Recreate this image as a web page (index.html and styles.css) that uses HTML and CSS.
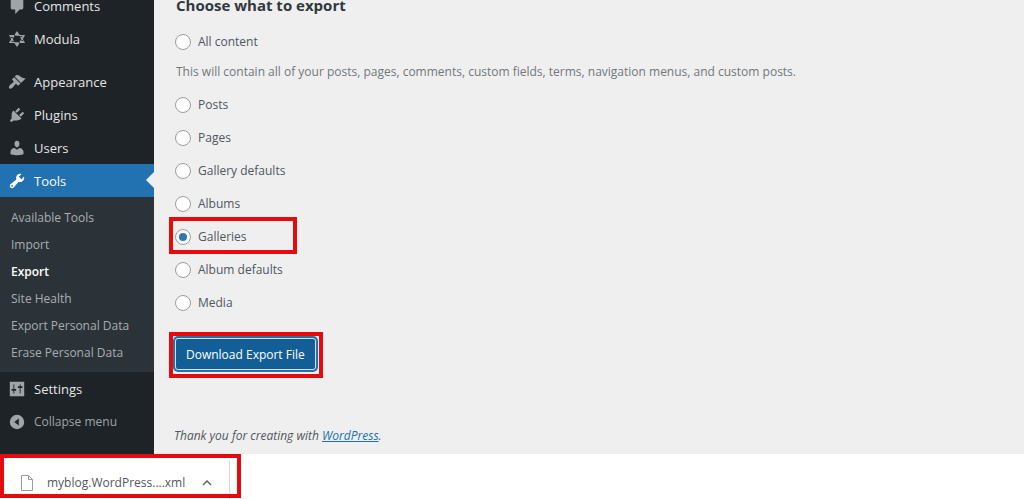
FILE: index.html
```html
<!DOCTYPE html>
<html lang="en">
<head>
    <meta charset="UTF-8">
    <meta name="viewport" content="width=device-width, initial-scale=1.0">
    <title>Export</title>
    <link rel="stylesheet" href="styles.css">
</head>
<body>
    <div class="admin">
        <!-- Admin menu -->
        <nav class="sidebar">
            <ul class="menu">
                <li>
                    <a href="#" class="menu-item">
                        <svg class="icon" viewBox="0 0 20 20"><path d="M5 2h10c1 0 2 .9 2 2v8c0 1-.9 2-2 2h-2l-5 5v-5H5c-1 0-2-.9-2-2V4c0-1 .9-2 2-2z"/></svg>
                        Comments
                    </a>
                </li>
                <li>
                    <a href="#" class="menu-item">
                        <svg class="icon" viewBox="0 0 20 20"><path fill-rule="evenodd" d="M10 1l3 4.500h6L16.500 10l2.500 4.500h-6L10 19l-3-4.500H1L3.500 10 1 5.500h6zM7.500 6.500L5.500 10l2 3.500h5l2-3.500-2-3.500z"/><path class="icon-gap" d="M6.500 4l2 4M16 7.500l-4 0M17 12l-4-1.500M13.500 16l-2-4M4 12.500h4M3 8l4 1.500"/></svg>
                        Modula
                    </a>
                </li>
                <li class="separator"></li>
                <li>
                    <a href="#" class="menu-item">
                        <svg class="icon" viewBox="0 0 20 20"><path d="M14.480 11.060L7.410 3.990l1.500-1.500c.5-.56 2.300-.47 3.510.32 1.210.8 1.430 1.280 2.910 2.100 1.180.64 2.450 1.260 4.450.85zm-.71.710L6.700 4.700 4.930 6.470c-.39.39-.39 1.020 0 1.410l1.060 1.060c.39.39.39 1.030 0 1.420-.6.6-1.430 1.110-2.210 1.690-.35.26-.7.53-1.010.84C1.430 14.230.4 16.080 1.400 17.070c.99 1 2.840-.03 4.180-1.360.31-.31.58-.66.85-1.020.57-.78 1.080-1.610 1.690-2.210.39-.39 1.020-.39 1.410 0l1.060 1.060c.39.39 1.020.39 1.410 0z"/></svg>
                        Appearance
                    </a>
                </li>
                <li>
                    <a href="#" class="menu-item">
                        <svg class="icon" viewBox="0 0 20 20"><path d="M13.110 4.360L9.870 7.600 8 5.730l3.240-3.240c.35-.34 1.050-.2 1.560.32.52.51.66 1.210.31 1.550zm-8 1.770l.91-1.120 9.010 9.010-1.190.84c-.71.71-2.630 1.160-3.820 1.160H6.140L4.900 17.260c-.59.59-1.540.59-2.120 0-.59-.58-.59-1.530 0-2.120l1.240-1.240v-3.880c0-1.130.4-3.190 1.090-3.890zm7.260 3.970l3.240-3.240c.34-.35 1.040-.21 1.550.31.52.51.66 1.210.31 1.550l-3.240 3.250z"/></svg>
                        Plugins
                    </a>
                </li>
                <li>
                    <a href="#" class="menu-item">
                        <svg class="icon" viewBox="0 0 20 20"><path d="M10 9.250c-2.270 0-2.730-3.440-2.730-3.440C7 4.020 7.820 2 9.970 2c2.160 0 2.980 2.020 2.710 3.810 0 0-.41 3.440-2.680 3.440zm0 2.570L12.720 10c2.390 0 4.520 2.330 4.520 4.530v2.490s-3.650 1.130-7.240 1.130c-3.650 0-7.240-1.130-7.240-1.130v-2.490c0-2.250 1.940-4.480 4.470-4.480z"/></svg>
                        Users
                    </a>
                </li>
                <li>
                    <a href="#" class="menu-item current">
                        <svg class="icon" viewBox="0 0 20 20"><path d="M16.680 9.770c-1.340 1.340-3.300 1.670-4.950.99l-5.410 6.520c-.99.99-2.590.99-3.580 0s-.99-2.590 0-3.570l6.520-5.420c-.68-1.650-.35-3.610.99-4.950 1.280-1.280 3.120-1.620 4.720-1.060l-2.890 2.890 2.820 2.820 2.860-2.870c.53 1.580.18 3.390-1.080 4.650zM3.810 16.210c.4.390 1.040.39 1.430 0 .4-.4.4-1.040 0-1.430-.39-.4-1.030-.4-1.430 0-.39.39-.39 1.030 0 1.430z"/></svg>
                        Tools
                    </a>
                    <ul class="submenu">
                        <li><a href="#">Available Tools</a></li>
                        <li><a href="#">Import</a></li>
                        <li><a href="#" class="active">Export</a></li>
                        <li><a href="#">Site Health</a></li>
                        <li><a href="#">Export Personal Data</a></li>
                        <li><a href="#">Erase Personal Data</a></li>
                    </ul>
                </li>
                <li>
                    <a href="#" class="menu-item">
                        <svg class="icon" viewBox="0 0 20 20"><path fill-rule="evenodd" d="M2 2h16v16H2zM6 5v5H4v2h2v3h1v-3h2v-2H7V5zM13 5v2h-2v2h2v6h1V9h2V7h-2V5z"/></svg>
                        Settings
                    </a>
                </li>
                <li>
                    <button type="button" class="menu-item collapse">
                        <svg class="icon" viewBox="0 0 20 20"><path fill-rule="evenodd" d="M10 2a8 8 0 1 0 0 16 8 8 0 0 0 0-16zM12 6v8l-5-4z"/></svg>
                        Collapse menu
                    </button>
                </li>
            </ul>
        </nav>

        <!-- Export form -->
        <main class="content">
            <form class="export-form">
                <h2>Choose what to export</h2>
                <label class="option"><input type="radio" name="content"> All content</label>
                <p class="description">This will contain all of your posts, pages, comments, custom fields, terms, navigation menus, and custom posts.</p>
                <label class="option"><input type="radio" name="content"> Posts</label>
                <label class="option"><input type="radio" name="content"> Pages</label>
                <label class="option"><input type="radio" name="content"> Gallery defaults</label>
                <label class="option"><input type="radio" name="content"> Albums</label>
                <label class="option highlight highlight-option"><input type="radio" name="content" checked> Galleries</label>
                <label class="option"><input type="radio" name="content"> Album defaults</label>
                <label class="option"><input type="radio" name="content"> Media</label>
                <div class="submit highlight">
                    <button type="submit" class="button-primary">Download Export File</button>
                </div>
            </form>
            <footer class="footer">Thank you for creating with <a href="#">WordPress</a>.</footer>
        </main>
    </div>

    <!-- Browser download bar -->
    <div class="downloads">
        <div class="download highlight">
            <svg class="file-icon" viewBox="0 0 14 16"><path d="M1.500.5h7l4 4v11h-11zM8.500.5v4h4"/></svg>
            <span class="file-name">myblog.WordPress....xml</span>
            <button type="button" class="file-menu" aria-label="Options">
                <svg viewBox="0 0 10 6"><path d="M1 5l4-4 4 4"/></svg>
            </button>
        </div>
    </div>
</body>
</html>
```

FILE: styles.css
```css
* {
    box-sizing: border-box;
}

body {
    margin: 0;
    min-height: 100vh;
    display: flex;
    flex-direction: column;
    overflow: hidden;
    background: #fff;
    color: #50575e;
    font-family: "Segoe UI", "Open Sans", sans-serif;
    font-size: 12px;
}

button {
    font-family: inherit;
    cursor: pointer;
}

.admin {
    flex: 1;
    display: flex;
    overflow: hidden;
    background: #efefef;
}

/* Sidebar */
.sidebar {
    width: 154px;
    flex-shrink: 0;
    background: #1d2327;
}

.menu,
.submenu {
    list-style: none;
    margin: 0;
    padding: 0;
}

/* page is scrolled, first item is partly cut off */
.menu {
    margin-top: -11px;
}

.menu-item {
    position: relative;
    display: flex;
    align-items: center;
    gap: 8px;
    width: 100%;
    height: 33px;
    padding: 0 8px;
    color: #e4e5e6;
    font-size: 13px;
    font-weight: 500;
    text-decoration: none;
}

.icon {
    width: 18px;
    height: 18px;
    fill: #a0a4a8;
}

.icon-gap {
    fill: none;
    stroke: #1d2327;
    stroke-width: 1;
}

.separator {
    height: 10px;
}

.current {
    background: #2271b1;
    color: #fff;
}

.current .icon {
    fill: #fff;
}

.current::after {
    content: "";
    position: absolute;
    right: 0;
    top: 8px;
    border: 8px solid transparent;
    border-left: 0;
    border-right-color: #efefef;
}

.collapse {
    border: 0;
    background: none;
    color: #a0a4a8;
    font-size: 12px;
    font-weight: 400;
}

.submenu {
    padding: 7px 0 6px;
    background: #2c3338;
}

.submenu a {
    display: block;
    padding-left: 11px;
    line-height: 27px;
    color: #a9adb1;
    text-decoration: none;
}

.submenu .active {
    color: #fff;
    font-weight: 600;
}

/* Content */
.content {
    flex: 1;
    display: flex;
    flex-direction: column;
    justify-content: space-between;
    padding: 0 20px;
}

.export-form {
    display: flex;
    flex-direction: column;
    align-items: flex-start;
}

h2 {
    margin: -7px 0 8px 2px;
    color: #32373c;
    font-size: 15px;
    font-weight: 700;
    line-height: 24px;
}

.option {
    display: flex;
    align-items: center;
    gap: 7px;
    height: 33px;
    padding-left: 1px;
}

.option input {
    appearance: none;
    display: grid;
    place-items: center;
    width: 16px;
    height: 16px;
    margin: 0;
    border: 1px solid #9a9da2;
    border-radius: 50%;
    background: #fff;
}

.option input:checked::before {
    content: "";
    width: 8px;
    height: 8px;
    border-radius: 50%;
    background: #2f78b7;
}

.description {
    margin: 0 0 3px 2px;
    color: #72777c;
    line-height: 27px;
}

.submit {
    margin-top: 18px;
}

.button-primary {
    display: block;
    height: 32px;
    margin: 1px;
    padding: 0 10px;
    border: 1px solid #d5e2ed;
    border-radius: 3px;
    box-shadow: 0 0 0 2px #2271b1;
    background: #135e96;
    color: #fff;
    font-size: 12px;
}

.footer {
    padding-bottom: 8px;
    font-style: italic;
    line-height: 20px;
}

.footer a {
    color: #2271b1;
}

/* Red marker boxes */
.highlight {
    position: relative;
}

.highlight::after {
    content: "";
    position: absolute;
    inset: -5px -6px -7px -5px;
    border: 4px solid #e40a0e;
    pointer-events: none;
}

.highlight-option::after {
    inset: -3px -50px -1px -5px;
}

.download::after {
    inset: 0 -11px 1px 0;
}

/* Download bar */
.downloads {
    display: flex;
    height: 45px;
}

.download {
    display: flex;
    align-items: center;
    width: 230px;
    padding: 12px 16px 0 20px;
    background: linear-gradient(#d8d8d8, #d8d8d8) right bottom / 1px 38px no-repeat;
}

.file-icon {
    width: 14px;
    height: 16px;
    fill: #fff;
    stroke: #9a9a9a;
}

.file-name {
    margin-left: 13px;
    white-space: nowrap;
}

.file-menu {
    display: flex;
    margin-left: auto;
    padding: 2px;
    border: 0;
    background: none;
}

.file-menu svg {
    width: 10px;
    height: 6px;
    fill: none;
    stroke: #666;
    stroke-width: 1.5;
}
```
